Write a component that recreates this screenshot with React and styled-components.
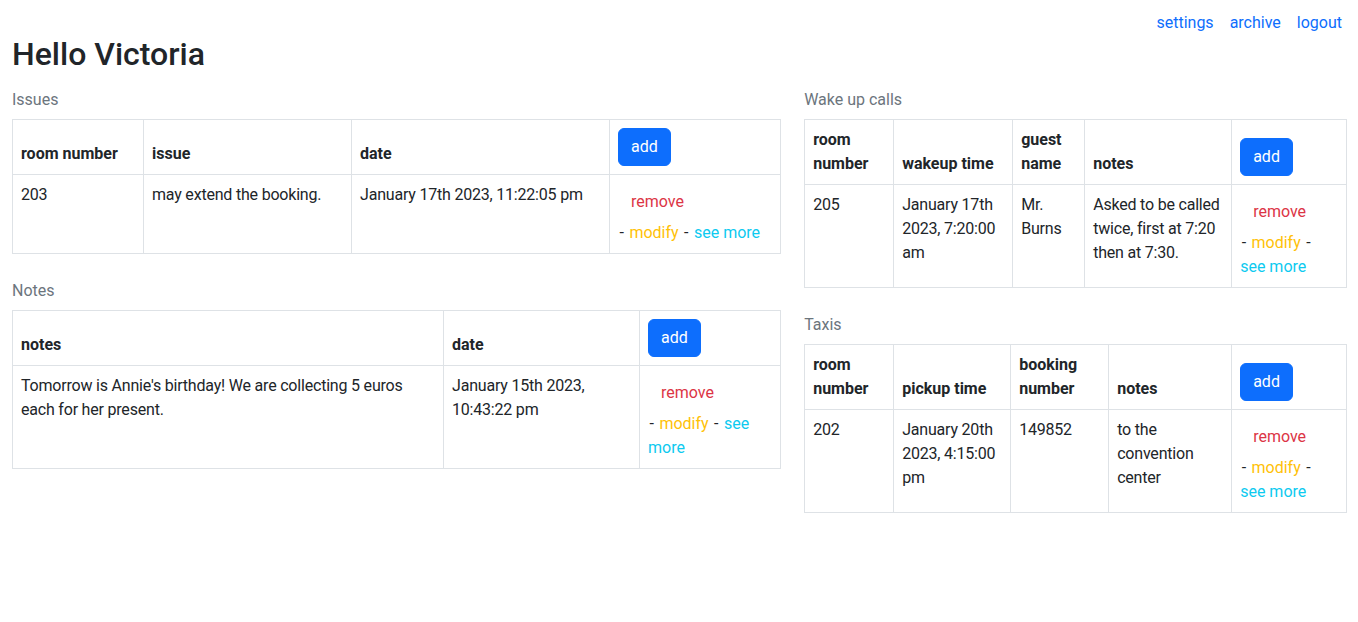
import React from "react";
import styled, { createGlobalStyle } from "styled-components";

const GlobalStyle = createGlobalStyle`
  html, body { margin: 0; padding: 0; background: #fff; }
  body {
    font-family: Roboto, "Liberation Sans", sans-serif;
    font-size: 16px;
    line-height: 1.5;
    color: #212529;
  }
  * { box-sizing: border-box; }
`;

const Page = styled.div`
  padding: 0 12px;
`;

const TopNav = styled.nav`
  display: flex;
  justify-content: flex-end;
  gap: 16px;
  padding: 11px 4px 0 0;
`;

const NavLink = styled.a`
  color: #0d6efd;
  text-decoration: none;
  line-height: 24px;
`;

const Title = styled.h2`
  font-size: 32px;
  font-weight: 500;
  line-height: 1.2;
  margin: 0 0 6px;
`;

const Row = styled.div`
  display: flex;
  margin: 0 -12px;
`;

const Column = styled.div`
  flex: 0 0 ${(p) => p.$span};
  max-width: ${(p) => p.$span};
  padding: 0 12px;
`;

const Table = styled.table`
  width: 100%;
  border-collapse: collapse;
  table-layout: fixed;
  caption-side: top;
  margin-bottom: 16px;
`;

const Caption = styled.caption`
  text-align: left;
  color: #6c757d;
  padding: 9px 0 7px;
`;

const ColW = styled.col`
  width: ${(p) => p.$w}px;
`;

const Th = styled.th`
  border: 1px solid #dee2e6;
  padding: 8px;
  text-align: left;
  vertical-align: bottom;
  font-weight: 700;
`;

const Td = styled.td`
  border: 1px solid #dee2e6;
  padding: 8px;
  vertical-align: top;
  letter-spacing: -0.2px;
`;

const ActionTd = styled(Td)`
  letter-spacing: 0;
`;

const Dash = styled.span`
  padding: 0 1.5px;
`;

const AddButton = styled.button`
  font-family: inherit;
  font-size: 16px;
  line-height: 24px;
  padding: 6px 12px;
  border: 1px solid #0d6efd;
  background: #0d6efd;
  color: #fff;
  border-radius: 6px;
  cursor: pointer;
`;

const RemoveButton = styled.button`
  display: block;
  font-family: inherit;
  font-size: 16px;
  line-height: 24px;
  padding: 6px 12px;
  border: 1px solid transparent;
  background: transparent;
  color: #dc3545;
  border-radius: 6px;
  cursor: pointer;
`;

const ActionLink = styled.a`
  color: ${(p) => (p.$tone === "warning" ? "#ffc107" : "#0dcaf0")};
  text-decoration: none;
`;

const tables = {
  issues: {
    caption: "Issues",
    widths: [131, 208, 258, 171],
    headers: ["room number", "issue", "date"],
    rows: [["203", "may extend the booking.", "January 17th 2023, 11:22:05 pm"]],
  },
  notes: {
    caption: "Notes",
    widths: [431, 196, 141],
    headers: ["notes", "date"],
    rows: [
      [
        "Tomorrow is Annie's birthday! We are collecting 5 euros each for her present.",
        "January 15th 2023, 10:43:22 pm",
      ],
    ],
  },
  wake: {
    caption: "Wake up calls",
    widths: [89, 119, 72, 147, 115],
    headers: ["room number", "wakeup time", "guest name", "notes"],
    rows: [
      [
        "205",
        "January 17th 2023, 7:20:00 am",
        "Mr. Burns",
        "Asked to be called twice, first at 7:20 then at 7:30.",
      ],
    ],
  },
  taxis: {
    caption: "Taxis",
    widths: [89, 117, 98, 123, 115],
    headers: ["room number", "pickup time", "booking number", "notes"],
    rows: [["202", "January 20th 2023, 4:15:00 pm", "149852", "to the convention center"]],
  },
};

function DataTable({ data }) {
  return (
    <Table>
      <Caption>{data.caption}</Caption>
      <colgroup>
        {data.widths.map((w, i) => (
          <ColW key={i} $w={w} />
        ))}
      </colgroup>
      <thead>
        <tr>
          {data.headers.map((h) => (
            <Th key={h}>{h}</Th>
          ))}
          <Th>
            <AddButton>add</AddButton>
          </Th>
        </tr>
      </thead>
      <tbody>
        {data.rows.map((r, i) => (
          <tr key={i}>
            {r.map((c, j) => (
              <Td key={j}>{c}</Td>
            ))}
            <ActionTd>
              <RemoveButton>remove</RemoveButton>
              <Dash>-</Dash> <ActionLink $tone="warning" href="#">modify</ActionLink>{" "}
              <Dash>-</Dash> <ActionLink $tone="info" href="#">see more</ActionLink>
            </ActionTd>
          </tr>
        ))}
      </tbody>
    </Table>
  );
}

export default function App() {
  return (
    <>
      <GlobalStyle />
      <Page>
        <TopNav>
          <NavLink href="#">settings</NavLink>
          <NavLink href="#">archive</NavLink>
          <NavLink href="#">logout</NavLink>
        </TopNav>
        <Title>Hello Victoria</Title>
        <Row>
          <Column $span="58.333333%">
            <DataTable data={tables.issues} />
            <DataTable data={tables.notes} />
          </Column>
          <Column $span="41.666667%">
            <DataTable data={tables.wake} />
            <DataTable data={tables.taxis} />
          </Column>
        </Row>
      </Page>
    </>
  );
}
